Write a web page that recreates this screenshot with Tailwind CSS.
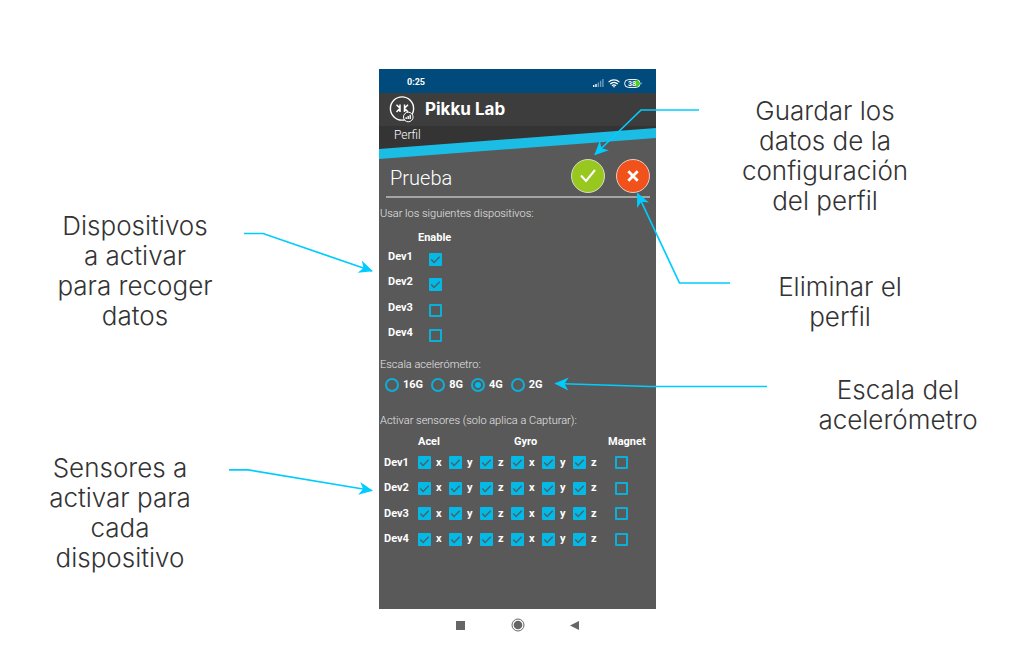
<!DOCTYPE html>
<html lang="es">
<head>
<meta charset="utf-8">
<title>Pikku Lab - Perfil</title>
<script src="https://cdn.jsdelivr.net/npm/@tailwindcss/browser@4"></script>
</head>
<body class="bg-white">
<main class="relative grid grid-cols-[minmax(0,379fr)_minmax(0,277fr)_minmax(0,357fr)] pb-4 font-[Inter,sans-serif]">

  <section class="pt-[211px] text-center text-[26px] leading-[30px] font-light text-[#333]">
    <p class="ml-[55px] w-40 whitespace-nowrap">Dispositivos<br>a activar<br>para recoger<br>datos</p>
    <p class="mt-[122px] ml-10 w-40 whitespace-nowrap">Sensores a<br>activar para<br>cada<br>dispositivo</p>
  </section>

  <section class="pt-[69px] font-[Roboto,sans-serif] text-white">
    <div class="bg-[#595959] pb-[57px]">
      <header>
        <div class="flex h-6 items-center bg-[#004a7c] pt-1 pr-[14px] pl-7 text-[9px] font-bold">
          <span>0:25</span>
          <div class="ml-auto flex items-center gap-1">
            <svg class="h-2 w-[11px]" viewBox="0 0 11 8" aria-label="Señal"><path d="M0 6h1.4v2H0zM2.3 5h1.4v3H2.3z" fill="#fff"/><path d="M4.6 3.4H6V8H4.6zM6.9 1.8h1.4V8H6.9zM9.2 0h1.4v8H9.2z" fill="#6f9abb"/></svg>
            <svg class="h-[9px] w-3" viewBox="0 0 12 9" fill="none" stroke="#fff" stroke-width="1.3" aria-label="Wifi"><path d="M.6 3.1C3.7.2 8.3.2 11.4 3.1M2.3 5c2.1-2 5.3-2 7.4 0M4 6.7c1.2-1 2.8-1 4 0"/><path d="M4.8 7.3h2.4L6 8.8z" fill="#fff" stroke="none"/></svg>
            <svg class="h-[9px] w-[18px]" viewBox="0 0 18 9" aria-label="Batería 38"><rect x=".6" y=".6" width="15.5" height="7.8" rx="3.9" fill="#004a7c" stroke="#fff" stroke-width="1"/><path d="M11 1.5h1.7a3 3 0 0 1 0 6H11z" fill="#49d318"/><path d="M17 3.2q1 1.3 0 2.6z" fill="#fff"/><text x="4" y="7" font-size="7" font-weight="700" fill="#fff">38</text></svg>
          </div>
        </div>
        <div class="flex h-[33px] items-center gap-[9px] bg-[#3d3d3d] pl-[10px]">
          <svg class="size-[27px]" viewBox="0 0 27 27" fill="none" stroke="#fff" aria-hidden="true">
            <circle cx="13" cy="12.5" r="11.6" stroke-width="1.4"/>
            <path d="M11 8.500v7.500M11 12.300 7.500 8.700M11 12.300 7.500 16M15.500 8.500v7.500M15.500 12.300 19 8.700M15.500 12.300 19 16" stroke-width="1.5"/>
            <circle cx="19.300" cy="21" r="4.800" fill="#3d3d3d" stroke-width="1"/>
            <path d="M17.200 23v-1.700M19.200 23v-3M21.200 23v-4.300" stroke-width="1.400"/>
          </svg>
          <h1 class="font-[Inter,sans-serif] text-[17px] font-bold">Pikku Lab</h1>
        </div>
        <div class="relative h-[34px] text-[12px] font-light">
          <svg class="absolute inset-0 size-full" viewBox="0 0 277 34" preserveAspectRatio="none" aria-hidden="true"><path d="M0 0H277V3L0 24z" fill="#343434"/><path d="M0 23 277 2V12L0 33z" fill="#1bbde5"/></svg>
          <span class="relative ml-[15px] leading-[18px]">Perfil</span>
        </div>
      </header>

      <form>
        <div class="mr-[6px] ml-[7px] flex h-[38px] items-center border-b-2 border-[#a5a5a5]">
          <input aria-label="Nombre del perfil" value="Prueba" class="min-w-0 flex-1 bg-transparent pl-1 text-[20px] font-light outline-none">
          <button type="button" aria-label="Guardar" class="mb-1 grid size-[34px] shrink-0 place-items-center rounded-full border border-[#d5dcc4] bg-[#98c81f]">
            <svg class="size-[18px]" viewBox="0 0 18 18" fill="none" stroke="#fff" stroke-width="2"><path d="m2 8.5 5 5.5 9-11"/></svg>
          </button>
          <button type="button" aria-label="Eliminar" class="mb-1 ml-[11px] grid size-[34px] shrink-0 place-items-center rounded-full border border-[#e5cdc4] bg-[#f1511b]">
            <svg class="size-3" viewBox="0 0 12 12" fill="none" stroke="#fff" stroke-width="2.8"><path d="m1.3 1.3 9.4 9.4m0-9.4-9.4 9.4"/></svg>
          </button>
        </div>

        <p class="mt-2 pl-px text-[11px] leading-4 font-light text-[#e8e8e8]">Usar los siguientes dispositivos:</p>
        <table class="mt-2 ml-[9px] h-[117px] text-left text-[11px] leading-4 font-bold">
          <thead><tr><td class="w-[30px]"></td><th scope="col">Enable</th></tr></thead>
          <tbody id="devices"></tbody>
        </table>

        <fieldset class="mt-[10px]">
          <legend class="pl-px text-[11px] leading-4 font-light text-[#e8e8e8]">Escala acelerómetro:</legend>
          <div class="mt-1 ml-[6px] flex gap-2 text-[11px] leading-4 font-bold">
            <label class="flex items-center gap-1"><input type="radio" name="scale" class="size-[14px] appearance-none rounded-full border-2 border-[#0cafd8] bg-clip-content p-[2px] checked:bg-[#04b9e5]">16G</label>
            <label class="flex items-center gap-1"><input type="radio" name="scale" class="size-[14px] appearance-none rounded-full border-2 border-[#0cafd8] bg-clip-content p-[2px] checked:bg-[#04b9e5]">8G</label>
            <label class="flex items-center gap-1"><input type="radio" name="scale" checked class="size-[14px] appearance-none rounded-full border-2 border-[#0cafd8] bg-clip-content p-[2px] checked:bg-[#04b9e5]">4G</label>
            <label class="flex items-center gap-1"><input type="radio" name="scale" class="size-[14px] appearance-none rounded-full border-2 border-[#0cafd8] bg-clip-content p-[2px] checked:bg-[#04b9e5]">2G</label>
          </div>
        </fieldset>

        <p class="mt-5 pl-px text-[11px] leading-4 font-light text-[#e8e8e8]">Activar sensores (solo aplica a Capturar):</p>
        <table class="mt-[5px] ml-[5px] h-[118px] w-[268px] table-fixed text-left text-[11px] leading-4 font-bold">
          <colgroup><col class="w-[34px]"><col span="6" class="w-[31px]"><col></colgroup>
          <thead><tr><td></td><th scope="colgroup" colspan="3">Acel</th><th scope="colgroup" colspan="3" class="pl-[3px]">Gyro</th><th scope="col" class="pl-1">Magnet</th></tr></thead>
          <tbody id="sensors"></tbody>
        </table>
      </form>
    </div>

    <nav class="flex justify-center gap-[33px] pt-1">
      <button type="button" aria-label="Recientes" class="grid size-6 place-items-center"><svg class="size-[9px]" viewBox="0 0 9 9"><path d="M0 0h9v9H0z" fill="#666"/></svg></button>
      <button type="button" aria-label="Inicio" class="grid size-6 place-items-center"><svg class="size-[14px]" viewBox="0 0 14 14"><circle cx="7" cy="7" r="6" fill="none" stroke="#666"/><circle cx="7" cy="7" r="4.3" fill="#666"/></svg></button>
      <button type="button" aria-label="Atrás" class="grid size-6 place-items-center"><svg class="size-[9px]" viewBox="0 0 9 9"><path d="M9 0v9L0 4.500z" fill="#666"/></svg></button>
    </nav>
  </section>

  <section class="pt-[96px] text-center text-[26px] leading-[30px] font-light text-[#333]">
    <p class="ml-[79px] w-[180px] whitespace-nowrap">Guardar los<br>datos de la<br>configuración<br>del perfil</p>
    <p class="mt-[56px] ml-[104px] w-40 whitespace-nowrap">Eliminar el<br>perfil</p>
    <p class="mt-[43px] ml-[152px] w-[180px] whitespace-nowrap">Escala del<br>acelerómetro</p>
  </section>

  <!-- Callout arrows lie over the phone and the notes -->
  <svg class="pointer-events-none absolute top-0 left-0 h-[659px] w-full" viewBox="0 0 1013 659" preserveAspectRatio="none" aria-hidden="true">
    <defs><marker id="tip" viewBox="0 0 14 14" refX="13" refY="7" markerWidth="14" markerHeight="14" markerUnits="userSpaceOnUse" orient="auto"><path d="M14 7 0 13.500 4 7 0 .5z" fill="#0cf"/></marker></defs>
    <g fill="none" stroke="#0cf" stroke-width="1.7">
      <path d="M244 233.500H263L372 271" marker-end="url(#tip)"/>
      <path d="M229 469.800H248L372 490.500" marker-end="url(#tip)"/>
      <path d="M699 110H641L595 154.500" marker-end="url(#tip)"/>
      <path d="M730 283H679.500L637.500 193.500" marker-end="url(#tip)"/>
      <path d="M767 386.500H650L555.500 383.500" marker-end="url(#tip)"/>
    </g>
  </svg>
</main>

<script>
  const box = (name, on) => `<span class="grid size-[13px] shrink-0"><input type="checkbox" aria-label="${name}" ${on ? 'checked' : ''} class="peer col-start-1 row-start-1 size-[13px] appearance-none rounded-[1px] border-2 border-[#0cafd8] checked:border-[#04b9e5] checked:bg-[#04b9e5]"><svg class="pointer-events-none invisible col-start-1 row-start-1 size-[13px] peer-checked:visible" viewBox="0 0 13 13" fill="none" stroke="#4a626a" stroke-width="1.4"><path d="m2.300 6.600 2.800 2.800 5.600-5.600"/></svg></span>`;
  const devs = ['Dev1', 'Dev2', 'Dev3', 'Dev4'];
  document.getElementById('devices').innerHTML = devs.map((d, i) =>
    `<tr><th scope="row" class="pb-[3px]">${d}</th><td class="pt-[2px] pl-[11px]">${box(d, i < 2)}</td></tr>`).join('');
  document.getElementById('sensors').innerHTML = devs.map(d =>
    `<tr><th scope="row">${d}</th>` + ['Acel x', 'Acel y', 'Acel z', 'Gyro x', 'Gyro y', 'Gyro z'].map(s =>
      `<td><label class="flex items-center gap-[5px]">${box(d + ' ' + s, true)}${s.slice(-1)}</label></td>`).join('') +
    `<td class="pl-[11px]">${box(d + ' Magnet', false)}</td></tr>`).join('');
</script>
</body>
</html>
